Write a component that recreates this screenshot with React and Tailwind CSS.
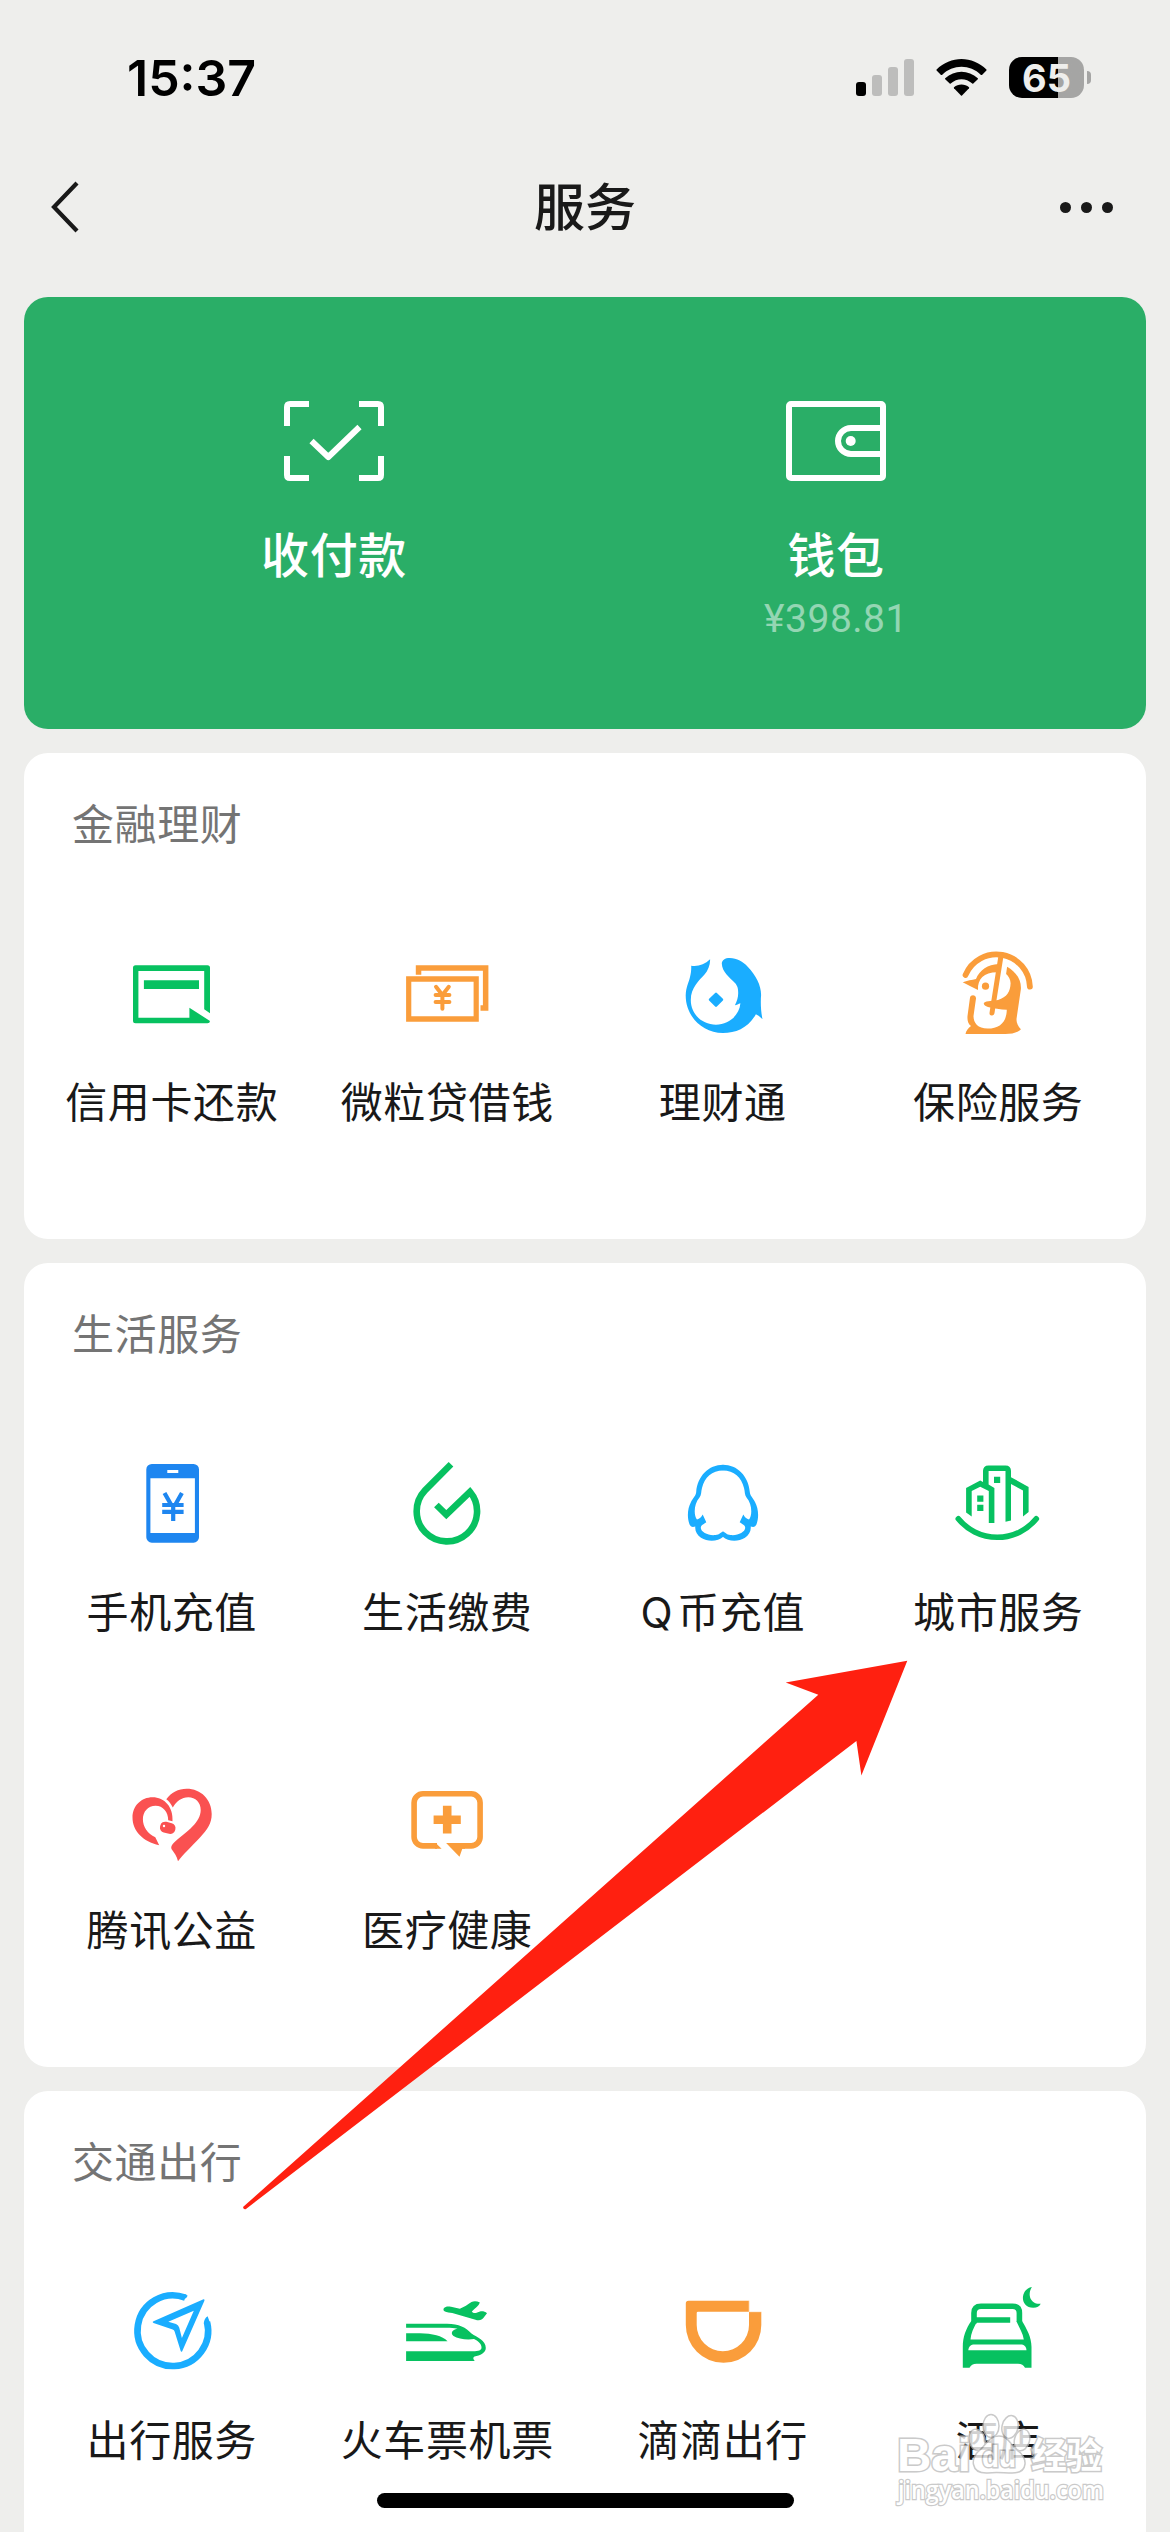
import React from 'react';

const GREEN = '#07c160';
const ORANGE = '#fa9d3b';
const BLUE = '#1aadff';
const RED = '#fa5151';

const Icon = ({ children }) => (
  <svg className="w-[84px] h-[84px] overflow-visible" viewBox="0 0 84 84" fill="none">
    {children}
  </svg>
);

const CreditCardIcon = () => (
  <Icon>
    <path fill={GREEN} d="M5.5 13.3H77.5a2.5 2.5 0 012.5 2.5V61.3L74.2 57.3V19H8.4V65.8H59.4V55.7L80 69a2.5 2.5 0 01-2.5 2.3H5.5a2.5 2.5 0 01-2.5-2.5V15.8a2.5 2.5 0 012.5-2.5z" />
    <path fill={GREEN} d="M13.9 28.3H69V37H13.9z" />
  </Icon>
);

const LoanIcon = () => (
  <Icon>
    <path fill={ORANGE} d="M10.8 22.7V13.3H83.4V58.7H75.5V53.3H77.9V18.7H16.3V22.7z" />
    <path fill={ORANGE} fillRule="evenodd" d="M1.1 24.3H73.8V69.7H1.1zM6.3 29.7V64.3H68.6V29.7z" />
    <path stroke={ORANGE} strokeWidth="4" strokeLinecap="round" strokeLinejoin="round" d="M31 34.8L37.4 43L43.8 34.8M37.4 43V56.8M30.6 43H44.4M30.6 50H44.4" />
  </Icon>
);

const WealthIcon = () => (
  <Icon>
    <path fill={BLUE} d="M40.8 11.5C41 8 44 6 48.8 6C56 6 62 9.5 66.7 14.7C75 23.5 80.1 33 80.1 43C79.6 49 79.6 58 81.5 67.3C79.5 65 77 63.5 74.9 62.3C67 76 55 81 41.9 81C21 81 4.7 64 4.7 43.5C5 35 7.6 31 9 25C10 21 10.4 17 10.2 13.7C17 14.8 23.5 12.5 29.1 7.3C29.3 13 27 18.5 23.5 22.5C18.5 28 9.8 35.5 9.8 48C9.8 62 21 72.7 35 72.7C48 72.7 58.5 63 59.4 51.3C57.5 52 55.5 53 53.9 53.3C56 49 57.2 45.5 57.2 41C57.2 36 56.5 34 54 31C49 26 41 20 40.8 11.5z" />
    <path fill={BLUE} stroke={BLUE} strokeWidth="2.5" strokeLinejoin="round" d="M35 41.8L41 47.7L35 53.6L29 47.7z" />
  </Icon>
);

const InsuranceIcon = () => (
  <Icon>
    <path stroke={ORANGE} strokeWidth="5.8" strokeLinecap="round" d="M9.5 23A33.5 33.5 0 0 1 73.9 34.7" />
    <path stroke={ORANGE} strokeWidth="5" strokeLinecap="round" d="M36 61L37.5 51L44.8 5" />
    <path fill={ORANGE} d="M42.5 12C32 12.5 23.5 18 20 27C16 28 11 28.5 6.7 30.3C12 33 17 35.5 22 38C21.5 27 28 20 42 20.3z" />
    <circle cx="29.5" cy="34.2" r="3.6" fill={ORANGE} />
    <path fill={ORANGE} d="M51.1 14.7C59 19 65.5 27 64.9 37L60.5 67C60.5 71.5 62 74 64.9 77.3C62 80.5 56 82 49.4 82H9.5C10 79 12 76 15 74C12 71.5 11.2 68.5 11.5 64L14 45.5C14.7 42 20.3 42.5 20 46.5L17.5 64C17.5 71 22 76.6 31.5 76.6C44 76.6 50.5 70 50.8 57.8C45 57.5 37 56.5 32 55C27.5 53.5 26 51 30.5 49.6L42 48C51 45 54.3 40 54.6 31.3C54.6 27.5 52.5 24 50.1 22z" />
  </Icon>
);

const PhoneIcon = () => (
  <Icon>
    <path fill="#1e86f0" fillRule="evenodd" d="M21.8 2H63.5a5.5 5.5 0 015.5 5.5V75.2a5.5 5.5 0 01-5.5 5.5H21.8a5.5 5.5 0 01-5.5-5.5V7.5A5.5 5.5 0 0121.8 2zM20.4 16.3V71H64.9V16.3zM37.3 8V11H48.3V8z" />
    <path stroke="#1e86f0" strokeWidth="4.2" d="M34.5 31L41 42.5M51.9 31L45.4 42.5M43.2 42V59M32.2 43H53.6M32.2 49.8H53.6" />
  </Icon>
);

const UtilityIcon = () => (
  <Icon>
    <path stroke={GREEN} strokeWidth="6.6" d="M46 2.2L20 28.4A30.2 30.2 0 1 0 65 29.8L41.3 52.7L31.4 43" />
  </Icon>
);

// Moitié gauche du pingouin, la droite est obtenue par symétrie
const PENGUIN_SIDE = 'M42.2 2.7C27.5 2.7 16.5 14 15.2 30C15 33.5 12 36 10 40C6.7 46 5.8 55 8.4 62C9.5 65 11.5 65.5 14.3 64.5C13.8 69 16 73 20 75.8C27 80 37 79.5 42.2 74.7V69.5C40 70 38.5 72.7 34.5 73C27.5 74 20 70 19.8 66C19.7 63 22.5 62.5 25.3 60.3L21.7 52.5C20.5 55 18.5 57 16 57.5C12.5 53 12.8 42 18.5 35.5C20.5 33 20 29.5 21 26C23.5 15.5 31 8.5 42.2 8.5z';

const PenguinIcon = () => (
  <Icon>
    <path fill={BLUE} d={PENGUIN_SIDE} />
    <path fill={BLUE} d={PENGUIN_SIDE} transform="translate(84 0) scale(-1 1)" />
  </Icon>
);

const CityIcon = () => (
  <Icon>
    <path stroke={GREEN} strokeWidth="5.6" strokeLinecap="round" d="M2.3 56.8A50.4 50.4 0 0 0 80.3 56.8" />
    <g fill={GREEN}>
      <path d="M10.1 26L24.2 18.6L27 20V9Q27 3.400 32.600 3.400H49.500Q55 3.400 55 9V15.200L72.600 25V50L67 54.500V28.600L55 22V58.500L49.500 59.800V9H32.600V22.500L38.400 26V61H32.800V29L24.200 24.800L15.700 29V54.500L10.100 50.500z" />
      <path d="M38 14.700h6.200v6.400H38zM21.200 33.400h6.200v6.400h-6.200zM21.200 42.700h6.200v6.400h-6.200z" />
    </g>
  </Icon>
);

const HeartIcon = () => (
  <Icon>
    <path fill={RED} d="M29.2 65.3C13 61.5 2.5 51 2.5 37.5C2.5 25.5 11.5 17.2 22.5 17.2C34.5 17.2 43.5 27 42.5 41.2L38.2 40.3C38.3 32 33 25.7 25.6 25.7C18 25.7 12.9 31.5 12.9 39.3C12.9 47 17.5 53.5 25.3 57.2z" />
    <path fill={RED} d="M36.3 19.3C41 12.5 48.5 8.7 56.6 8.7C71 8.7 81.7 19.5 81.7 34C81.7 43.5 77.5 49.5 70 57.5C61 67 53 74.5 48 81.3C47 76 44 72.5 41.5 69C40.5 66 43 63.5 46 60.8C57 51.5 70.7 42.5 70.7 30C70.7 22.5 65.5 17.3 58.3 17.3C51.5 17.3 46.5 21.5 42.8 27.5C41 24 39 21 36.3 19.3z" />
    <rect x="30" y="42.3" width="15.5" height="11" rx="5" fill={RED} transform="rotate(14 37.7 47.7)" />
    <circle cx="34" cy="46" r="1.2" fill="#fff" />
  </Icon>
);

const MedicalIcon = () => (
  <Icon>
    <path stroke={ORANGE} strokeWidth="5.6" d="M32 65.9H18A8.9 8.9 0 019.1 57V22.7A8.9 8.9 0 0118 13.8H66.2A8.9 8.9 0 0175.1 22.7V57A8.9 8.9 0 0166.2 65.9H50" />
    <path fill={ORANGE} d="M30.7 63.1L36.6 68.7H30zM41.1 63.1H60V68.7H57.3L54.5 76.7z" />
    <path fill={ORANGE} d="M37.9 25.7H46.5V35.5H55.8V44H46.5V53.5H37.9V44H28.6V35.5H37.9z" />
  </Icon>
);

const TravelIcon = () => (
  <Icon>
    <path stroke={BLUE} strokeWidth="6.6" d="M55.3 7.7A35.3 35.3 0 1 0 77 32" />
    <path fill={BLUE} d="M54 4L57.6 5.6Q57 8.5 53 9.3zM73.8 33.5Q74 28.5 77.6 26.200L80.300 33.500z" />
    <path fill={BLUE} fillRule="evenodd" d="M73.5 9.200Q75 9 74.400 10.700L52.200 61.200Q51.300 62.500 50.700 61L44.600 41.500Q44.200 40 42.700 39.500L23.500 33Q21.700 32 23.500 31.200zM63.800 20.700L38.300 31.700L46 34Q48.500 35 49.200 37.500L51.900 48z" />
  </Icon>
);

const TrainIcon = () => (
  <Icon>
    <path fill={GREEN} d="M1.1 33.7H42C54 33.7 61 37.5 66.5 43.5C72 47.5 80.8 50 80.8 58C80.8 63 75 65.5 69.5 66.5Q67 68 69.7 71H1.1V61.2H68C73.5 61.2 76.8 60.500 76.500 57C76.200 53.500 73 51 69 49C62 50 53 49 48.500 46C45.500 43.500 46.500 40 52.500 38.800C49 37.900 46 37.800 42 37.800H1.100z" />
    <path fill={GREEN} d="M1.1 43.3H15C27 43.3 37.5 46 42.5 51.2H1.1z" />
    <path fill={GREEN} d="M38.8 18.3C40.5 16.3 43 16 46 16.8L54.9 18.8C59 17 63 14.5 66.5 12C69 10.8 72 11 74.9 12.5C73.5 16 70.5 18 66.8 21.5C69 24.5 72 22.5 75 21.5C77.5 21 80 21.5 82 23.3C80 26 79 27.5 77 29.3C74 31 71 30 67 28.7L49 23.5C45 22.2 36.5 22.8 38.8 18.3z" />
  </Icon>
);

const RideIcon = () => (
  <Icon>
    <path fill={ORANGE} fillRule="evenodd" d="M7.5 10.7H68.3V21.7H80.3V35A37.75 37.75 0 014.8 35V13.4A2.7 2.7 0 017.5 10.7zM15.7 23V35A26.15 26.15 0 0068 35V21.7H17Q15.7 21.7 15.7 23z" />
    <path stroke="#fff" strokeWidth="0.6" d="M68.2 10.7V21.7H80.3" />
  </Icon>
);

const HotelIcon = () => (
  <Icon>
    <path fill={GREEN} d="M75.9 -3C64 -1 63.5 17.7 77.3 17.7C81 17.7 83.5 16.2 84.7 13.7C75.5 15 70.5 5.5 75.9 -3z" />
    <path stroke={GREEN} strokeWidth="5.6" d="M18 33.5V23Q18 16.2 25 16.2H56.5Q63.4 16.2 63.4 23V32M18 30H54.2" />
    <path fill={GREEN} d="M15.3 31L20.5 32.5C17.5 38 15 43.5 14.5 49.5H67.8C67 43.5 63.5 38 60.5 31.5L66 31C70.5 38.5 75.5 47 75.5 57V77.7H69C67.5 75 65.5 73.7 62 73.7H20.5C17 73.7 15 75 13.5 77.7H6.8V57C6.8 47 10 38.5 15.3 31z" />
    <path fill="#fff" d="M12.3 60.3C12.5 56.5 15 54.5 18.5 54.5H64.5C68 54.5 70.3 56.5 70.5 60.3z" />
  </Icon>
);

const SECTIONS = [
  {
    title: '金融理财',
    items: [
      { label: '信用卡还款', icon: CreditCardIcon },
      { label: '微粒贷借钱', icon: LoanIcon },
      { label: '理财通', icon: WealthIcon },
      { label: '保险服务', icon: InsuranceIcon },
    ],
  },
  {
    title: '生活服务',
    items: [
      { label: '手机充值', icon: PhoneIcon },
      { label: '生活缴费', icon: UtilityIcon },
      { prefix: 'Q', label: '币充值', icon: PenguinIcon },
      { label: '城市服务', icon: CityIcon },
      { label: '腾讯公益', icon: HeartIcon },
      { label: '医疗健康', icon: MedicalIcon },
    ],
  },
  {
    title: '交通出行',
    items: [
      { label: '出行服务', icon: TravelIcon },
      { label: '火车票机票', icon: TrainIcon },
      { label: '滴滴出行', icon: RideIcon },
      { label: '酒店', icon: HotelIcon },
    ],
  },
];

const StatusBar = () => (
  <div className="h-[155px] pl-[127px] pr-[79px] flex items-center justify-between">
    <span className="font-['Inter'] font-semibold text-[50px] leading-none text-black">15:37</span>
    <div className="flex items-center">
      <div className="flex items-end gap-1.5 h-[37px] mr-[22px]">
        <div className="w-2.5 h-3.5 rounded-[3px] bg-black" />
        <div className="w-2.5 h-[21px] rounded-[3px] bg-[#bdbdbc]" />
        <div className="w-2.5 h-[29px] rounded-[3px] bg-[#bdbdbc]" />
        <div className="w-2.5 h-[37px] rounded-[3px] bg-[#bdbdbc]" />
      </div>
      <svg className="w-[51px] h-[37px] mr-[22px]" viewBox="0 0 51 37" fill="#000">
        <path d="M0.6 10.6C14.5 -3.5 36.5 -3.5 50.4 10.6Q50.8 11.1 50.4 11.6L46 15.9Q45.5 16.2 45 15.9C34 5 17 5 6 15.9Q5.5 16.2 5 15.9L0.6 11.6Q0.2 11.1 0.6 10.6z" />
        <path d="M9.2 19.3C18.5 10.5 32.5 10.5 41.8 19.3Q42.2 19.8 41.8 20.3L37.3 24.6Q36.8 25 36.3 24.6C30 18.9 21 18.9 14.7 24.6Q14.2 25 13.7 24.6L9.2 20.3Q8.8 19.8 9.2 19.3z" />
        <path d="M18 28.2C22 24.6 29 24.6 33 28.2Q33.4 28.8 33 29.3L26 36.5Q25.5 37 25 36.5L18 29.3Q17.6 28.8 18 28.2z" />
      </svg>
      <div className="w-[75px] h-[41px] rounded-[13px] bg-linear-to-r from-black from-65% to-[#a5a5a4] to-65% flex items-center justify-center">
        <span className="font-['Inter'] font-bold text-[38px] leading-none text-[#eeeeec]">65</span>
      </div>
      <div className="ml-[3px] w-1 h-[13px] rounded-r-full bg-[#a5a5a4]" />
    </div>
  </div>
);

const NavBar = () => (
  <div className="h-[142px] pb-[38px] px-[50px] grid grid-cols-3 items-center">
    <svg className="w-[30px] h-[54px]" viewBox="0 0 30 54" fill="none" stroke="#191919" strokeWidth="4.2">
      <path d="M27 3L4 27L27 51" />
    </svg>
    <h1 className="pb-1.5 text-center text-[51px] leading-[60px] font-medium text-[#191919]">服务</h1>
    <div className="flex justify-end gap-2.5 pr-[7px]">
      <div className="w-[11px] h-[11px] rounded-full bg-[#191919]" />
      <div className="w-[11px] h-[11px] rounded-full bg-[#191919]" />
      <div className="w-[11px] h-[11px] rounded-full bg-[#191919]" />
    </div>
  </div>
);

const PayCard = () => (
  <div className="h-[432px] rounded-3xl bg-[#2aae67] px-[59px] pt-[104px] grid grid-cols-2 text-white">
    <div className="flex flex-col items-center">
      <svg className="w-[100px] h-20" viewBox="0 0 100 80" fill="none" stroke="#fff" strokeWidth="6">
        <path d="M25 3H6Q3 3 3 6V25M75 3H94Q97 3 97 6V25M3 55V74Q3 77 6 77H25M97 55V74Q97 77 94 77H75" />
        <path strokeLinejoin="round" d="M27.5 40L44.3 56L75.5 26" />
      </svg>
      <span className="mt-[41px] text-[48px] leading-[60px] font-medium tracking-[0.6px]">收付款</span>
    </div>
    <div className="flex flex-col items-center">
      <svg className="w-[100px] h-20" viewBox="0 0 100 80" fill="none" stroke="#fff" strokeWidth="6">
        <rect x="3" y="3" width="94" height="74" rx="2" />
        <path d="M97 27H65A13 13 0 0 0 65 53H97" />
        <circle cx="64.7" cy="40" r="5" fill="#fff" stroke="none" />
      </svg>
      <span className="mt-[41px] text-[48px] leading-[60px] font-medium tracking-[0.6px]">钱包</span>
      <span className="mt-3 font-['Roboto'] text-[39px] leading-[50px] tracking-[0.5px] text-white/50">¥398.81</span>
    </div>
  </div>
);

const ServiceSection = ({ title, items }) => (
  <section className="rounded-3xl bg-white">
    <h2 className="h-[168px] pt-[39px] pl-12 text-[42px] leading-[60px] tracking-[0.6px] text-[#747474]">{title}</h2>
    <div className="px-2.5 grid grid-cols-4">
      {items.map(({ prefix, label, icon: ServiceIcon }) => (
        <div key={label} className="h-[318px] pt-[31px] flex flex-col items-center">
          <ServiceIcon />
          <span className="mt-[34px] text-[42px] leading-[60px] tracking-[0.6px] text-[#191919] whitespace-nowrap">
            {prefix && <span className="font-['Inter'] mr-1 leading-none">{prefix}</span>}
            {label}
          </span>
        </div>
      ))}
    </div>
  </section>
);

// Flèche rouge pointant vers 城市服务
const PointerArrow = () => (
  <svg className="absolute left-[242px] top-[1660px] w-[668px] h-[552px]" viewBox="242 1660 668 552">
    <path fill="#ff2010" d="M243 2207L818.3 1694.7L785.7 1682.5L907.3 1660.7L861.4 1775.5L856.4 1741L246 2209Q243.5 2210 243 2207z" />
  </svg>
);

const Watermark = () => (
  <svg className="absolute left-[890px] top-[2396px] w-[230px] h-[130px] opacity-80" viewBox="890 2396 230 130" fill="#fff" stroke="#bdbdbd" strokeWidth="1.5">
    <ellipse cx="991" cy="2426" rx="8" ry="11.5" />
    <ellipse cx="1010" cy="2427" rx="8" ry="11.5" transform="rotate(12 1010 2427)" />
    <ellipse cx="977" cy="2440" rx="8" ry="11" transform="rotate(-15 977 2440)" />
    <ellipse cx="1022" cy="2440" rx="7.5" ry="11" transform="rotate(15 1022 2440)" />
    <path d="M999 2436C1008 2436 1010 2444 1017 2450C1028 2457 1029 2473 1012 2473C1004 2473 996 2472 988 2473C970 2474 970 2457 980 2450C987 2444 989 2436 999 2436z" />
    <g paintOrder="stroke" strokeWidth="3" fontWeight="700">
      <text x="897" y="2471" fontSize="47" textLength="74" lengthAdjust="spacingAndGlyphs" className="font-['Liberation_Sans']">Bai</text>
      <text x="982" y="2467" fontSize="30" textLength="34" lengthAdjust="spacingAndGlyphs" className="font-['Liberation_Sans']">du</text>
      <text x="1031" y="2469" fontSize="36" textLength="71" className="font-['Noto_Sans_CJK_SC']">经验</text>
    </g>
    <text x="898" y="2499" fontSize="25" fontWeight="600" textLength="206" lengthAdjust="spacingAndGlyphs" paintOrder="stroke" strokeWidth="2.5" className="font-['Open_Sans']">jingyan.baidu.com</text>
  </svg>
);

const App = () => (
  <div className="relative w-[1170px] h-[2532px] overflow-hidden bg-[#eeeeec] font-['Noto_Sans_CJK_SC',sans-serif]">
    <StatusBar />
    <NavBar />
    <main className="px-6 flex flex-col gap-6">
      <PayCard />
      {SECTIONS.map(section => (
        <ServiceSection key={section.title} title={section.title} items={section.items} />
      ))}
    </main>

    <PointerArrow />
    <Watermark />

    {/* Home indicator */}
    <div className="absolute left-[377px] top-[2493px] w-[417px] h-[15px] rounded-full bg-black" />
  </div>
);

export default App;
